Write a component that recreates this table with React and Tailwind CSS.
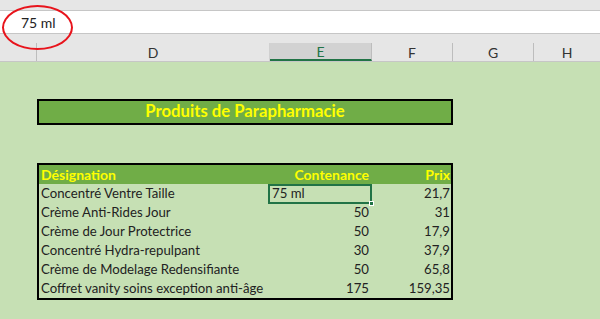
const rows = [
  ["Concentré Ventre Taille", "75 ml", "21,7"],
  ["Crème Anti-Rides Jour", "50", "31"],
  ["Crème de Jour Protectrice", "50", "17,9"],
  ["Concentré Hydra-repulpant", "30", "37,9"],
  ["Crème de Modelage Redensifiante", "50", "65,8"],
  ["Coffret vanity soins exception anti-âge", "175", "159,35"],
];

export default function App() {
  return (
    <div className="relative w-[600px] h-[319px] overflow-hidden bg-[#c6e0b4] text-[13.2px] text-[#222]" style={{ fontFamily: "Lato, 'Open Sans', sans-serif" }}>
      {/* formula bar */}
      <div className="h-[10px] bg-[#e6e6e6]" />
      <div className="h-[24px] bg-white border-y border-[#c6c6c6] flex items-center pl-[21px] text-[14px]">
        75 ml
      </div>
      <div className="h-[9px] bg-[#e6e6e6]" />
      {/* column headers */}
      <div className="flex h-[19px] bg-[#e6e6e6] border-b border-[#c6c6c6] text-[14px] text-[#333]">
        <div className="w-[37px] border-r border-[#bdbdbd]" />
        <div className="w-[233px] flex items-center justify-center border-r border-[#d0d0d0]">D</div>
        <div className="w-[102px] flex items-center justify-center bg-[#d2d2d2] border-b-2 border-[#217346] text-[#217346] border-r border-r-[#bdbdbd]">E</div>
        <div className="w-[81px] flex items-center justify-center border-r border-[#bdbdbd]">F</div>
        <div className="w-[81px] flex items-center justify-center border-r border-[#bdbdbd]">G</div>
        <div className="flex-1 flex items-center justify-center">H</div>
      </div>

      <div className="pl-[37px] pt-[37px]">
        <div className="w-[416px] h-[26px] bg-[#70ad47] border-2 border-black flex items-center justify-center font-bold text-[16.7px] text-[#ffff00]">
          Produits de Parapharmacie
        </div>

        <div className="mt-[38px] w-[416px] border-2 border-black">
          <div className="flex h-[19px] bg-[#70ad47] font-bold text-[14px] text-[#ffff00] items-center">
            <div className="w-[231px] pl-[2px]">Désignation</div>
            <div className="w-[102px] text-right pr-[3px]">Contenance</div>
            <div className="flex-1 text-right pr-[1px]">Prix</div>
          </div>
          {rows.map((r, i) => (
            <div key={i} className="flex h-[19px] items-center">
              <div className="w-[231px] pl-[2px] whitespace-nowrap">{r[0]}</div>
              {i === 0 ? (
                <div className="relative w-[104px] h-[20px] -ml-[2px] border-2 border-[#217346] flex items-center pl-[2px]">
                  {r[1]}
                  <span className="absolute -right-[4px] -bottom-[4px] w-[5px] h-[5px] bg-[#217346] border border-white" />
                </div>
              ) : (
                <div className="w-[102px] text-right pr-[3px]">{r[1]}</div>
              )}
              <div className="flex-1 text-right pr-[1px]">{r[2]}</div>
            </div>
          ))}
        </div>
      </div>

      {/* red annotation ellipse */}
      <div className="absolute left-[2px] top-[5px] w-[71px] h-[45px] rounded-[50%] border-2 border-[#e8141c]" />
    </div>
  );
}
